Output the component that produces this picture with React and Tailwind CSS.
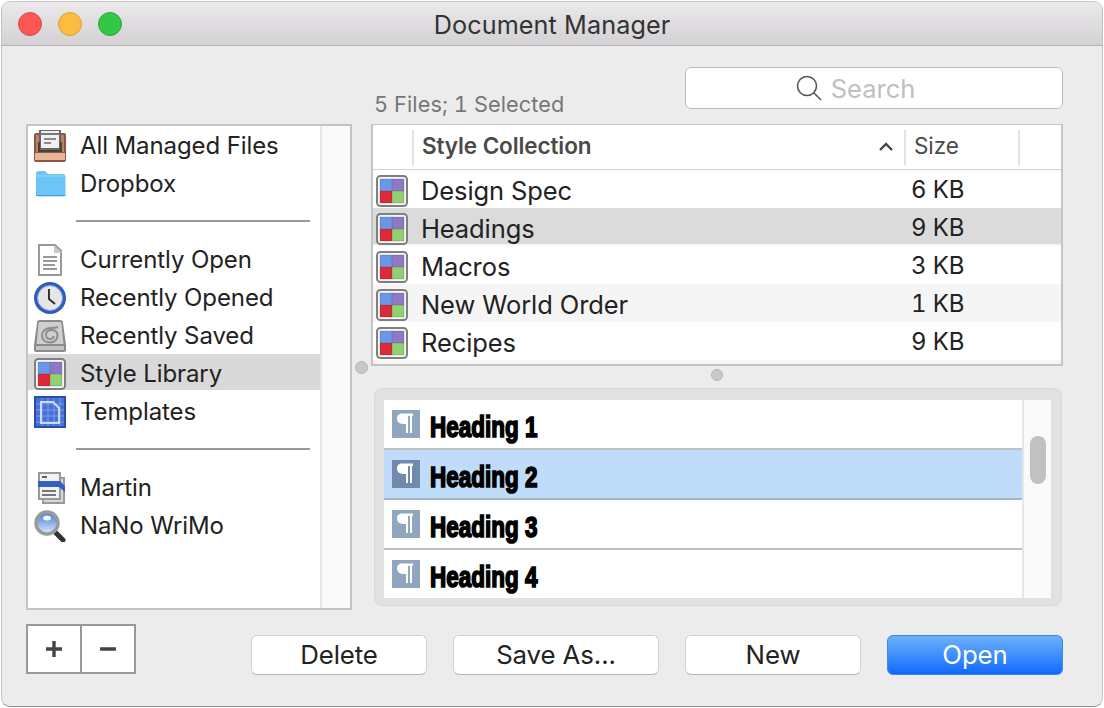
import React from "react";

const F = "font-['Inter','Liberation_Sans',sans-serif]";

function StyleIcon() {
  return (
    <svg width="32" height="32" viewBox="0 0 32 32" className="shrink-0">
      <rect x="1" y="1" width="30" height="30" rx="3.5" fill="#f6f6f6" stroke="#7f7f7f" strokeWidth="2" />
      <rect x="4" y="4" width="12" height="12" fill="#6b97e8" />
      <rect x="16" y="4" width="12" height="12" fill="#8f79c6" />
      <rect x="4" y="16" width="12" height="12" fill="#dd2a3a" />
      <rect x="16" y="16" width="12" height="12" fill="#90d06f" />
      <path d="M4 4h24v24H4zM16 4v24M4 16h24" fill="none" stroke="#000" strokeOpacity=".14" />
    </svg>
  );
}
function BoxIcon() {
  return (
    <svg width="32" height="32" viewBox="0 0 32 32" className="shrink-0">
      <rect x="0" y="3" width="32" height="29" rx="2" fill="#8f5547" />
      <rect x="2" y="5" width="28" height="17" fill="#b8846c" />
      <rect x="1" y="23" width="30" height="7" fill="#e6b896" />
      <rect x="6" y="0" width="20" height="19" fill="#f0f0f0" stroke="#666" strokeWidth="2" />
      <path d="M6 4h20" stroke="#777" strokeWidth="2" />
      <path d="M4 22V12h2v8h20v-8h2v10z" fill="#4d4038" />
      <path d="M10 9h12M10 13h7" stroke="#8a8a8a" strokeWidth="2" />
    </svg>
  );
}
function FolderIcon() {
  return (
    <svg width="32" height="26" viewBox="0 0 32 26" className="shrink-0">
      <path d="M2 2.5C2 1 3 0 4.500 0h6.500l3 3h15c1.500 0 2.500 1 2.500 2.500V23c0 1.500-1 2.500-2.500 2.500h-25C3 25.500 2 24.500 2 23z" fill="#6dc4f6" />
      <path d="M2 5h29" stroke="#9bd8fa" />
      <path d="M2 24.500h29.500" stroke="#4aa0d4" />
    </svg>
  );
}
function DocIcon() {
  return (
    <svg width="32" height="32" viewBox="0 0 32 32" className="shrink-0">
      <path d="M5 1h16l6 6v24H5z" fill="#fff" stroke="#999" strokeWidth="2" />
      <path d="M20 1v8h8z" fill="#c8c8c8" />
      <path d="M9 13h14M9 17h14M9 21h12M9 25h14" stroke="#777" strokeWidth="1.600" />
    </svg>
  );
}
function ClockIcon() {
  return (
    <svg width="32" height="32" viewBox="0 0 32 32" className="shrink-0">
      <circle cx="16" cy="16" r="16" fill="#2f5cb8" />
      <circle cx="16" cy="16" r="12.500" fill="#e6e6e6" stroke="#7f9be0" />
      <path d="M15 7v10l6 5" fill="none" stroke="#333" strokeWidth="2" />
    </svg>
  );
}
function DriveIcon() {
  return (
    <svg width="32" height="32" viewBox="0 0 32 32" className="shrink-0">
      <path d="M6 0h20c2 0 3 1 3 3l3 22v5c0 1-1 2-2 2H2c-1 0-2-1-2-2v-5L3 3c0-2 1-3 3-3z" fill="#8a8a8a" />
      <path d="M6 2h20c1 0 1.500.5 1.500 2l2 20H2.500l2-20C4.500 2.500 5 2 6 2z" fill="#cfcfcf" />
      <rect x="2" y="26" width="28" height="4" fill="#c4c4c4" />
      <path d="M24 7c-2 1-4 1-7 1-5 0-9 3-9 7.500s3.500 7 8 7 7.500-3 7.500-7-2.500-5.500-6-5.500-5.500 2-5.500 5 2 4 4 4 3.500-1 3.500-3" fill="none" stroke="#8d8d8d" strokeWidth="2" />
    </svg>
  );
}
function TemplateIcon() {
  return (
    <svg width="32" height="32" viewBox="0 0 32 32" className="shrink-0">
      <rect width="32" height="32" fill="#2a4ea6" />
      <rect x="2" y="2" width="28" height="28" fill="#4470d8" />
      <path d="M2 8h28M2 14h28M2 20h28M2 26h28M8 2v28M14 2v28M20 2v28M26 2v28" stroke="#7d9be6" strokeWidth="1" />
      <path d="M7 6h12l6 6v15H7z" fill="none" stroke="#cdd9f6" strokeWidth="2" />
    </svg>
  );
}
function SmartIcon() {
  return (
    <svg width="32" height="32" viewBox="0 0 32 32" className="shrink-0">
      <rect x="9" y="6" width="21" height="25" fill="#d8d8d8" stroke="#999" strokeWidth="2" />
      <rect x="5" y="1" width="21" height="26" fill="#f2f2f2" stroke="#999" strokeWidth="2" />
      <path d="M8 5h5" stroke="#666" strokeWidth="2" />
      <path d="M4 9h22l5 5v6L25 15H4z" fill="#3560c0" />
      <path d="M8 19h14M8 23h14" stroke="#777" strokeWidth="2" />
    </svg>
  );
}
function LensIcon() {
  return (
    <svg width="32" height="32" viewBox="0 0 32 32" className="shrink-0">
      <defs>
        <linearGradient id="lens" x1="0" y1="0" x2="0" y2="1">
          <stop offset="0" stopColor="#3d78d8" />
          <stop offset="1" stopColor="#dfe9f8" />
        </linearGradient>
      </defs>
      <path d="M19 20l10 10" stroke="#333" strokeWidth="5" strokeLinecap="round" />
      <circle cx="13" cy="13" r="11" fill="url(#lens)" stroke="#9a9a9a" strokeWidth="3.500" />
      <ellipse cx="13" cy="8" rx="4" ry="2.500" fill="#fff" fillOpacity=".9" />
    </svg>
  );
}
function Pilcrow({ dark }) {
  return (
    <svg width="28" height="28" viewBox="0 0 28 28" className="shrink-0">
      <rect width="28" height="28" fill={dark ? "#7089ac" : "#90a6bf"} />
      <path d="M10 3.500h11v2.500h-1v17h-2V6h-2v17h-2V14h-3c-3.500 0-6-2.200-6-5.200S6.500 3.500 10 3.500z" fill="#fff" />
    </svg>
  );
}

function SideRow({ icon, label, selected }) {
  return (
    <div className="h-[38px] shrink-0">
      <div className={`h-[36px] pt-[4px] flex items-center pl-[6px] ${selected ? "bg-[#d9d9d9]" : ""}`}>
        <div className="w-[32px] h-[32px] flex items-center justify-center shrink-0">{icon}</div>
        <span className="ml-[14px] text-[24px] leading-[36px] text-[#222] tracking-[-0.1px]">{label}</span>
      </div>
    </div>
  );
}
function SideSep() {
  return (
    <div className="h-[38px] shrink-0 flex items-center pl-[48px] pr-[10px]">
      <div className="h-[2px] w-full bg-[#999]" />
    </div>
  );
}
function FileRow({ name, size, bg }) {
  return (
    <div className={`h-[38px] shrink-0 ${bg}`}>
      <div className="h-[36px] pt-[5px] flex items-center pl-[3px]">
        <StyleIcon />
        <span className="ml-[13px] w-[490px] text-[25.5px] leading-[36px] text-[#222] tracking-[-0.1px]">{name}</span>
        <span className="mt-[-2px] text-[24px] leading-[36px] text-[#222] tracking-[-0.1px] tabular-nums">{size}</span>
      </div>
    </div>
  );
}
function HeadingRow({ label, selected }) {
  return (
    <div className={`h-[48px] flex items-start pl-[8px] overflow-hidden ${selected ? "bg-[#bfdcfb]" : ""}`}>
      <div className="mt-[10px]"><Pilcrow dark={selected} /></div>
      <span className="ml-[10px] mt-[9px] inline-block origin-left scale-x-[0.75] font-['Liberation_Sans',sans-serif] font-bold text-black text-[30px] leading-[36px] [-webkit-text-stroke:1.7px_black] whitespace-nowrap">
        {label}
      </span>
    </div>
  );
}
function Btn({ label, w }) {
  return (
    <div className={`${w} h-[40px] shrink-0 flex items-center justify-center rounded-[6px] bg-white border border-[#d2d2d2] border-b-[#b4b4b4] text-[25.8px] text-[#222] leading-none tracking-[-0.1px]`}>
      {label}
    </div>
  );
}

export default function App() {
  return (
    <div className={`w-[1104px] h-[708px] bg-white pt-[1px] pl-[1px] overflow-hidden ${F}`}>
      <div className="w-[1102px] h-[706px] rounded-[9px] bg-[#ececec] border border-[#c4c4c4] border-b-[#8e8e8e] overflow-hidden relative">
        {/* title bar */}
        <div className="h-[44px] relative flex items-center justify-center bg-gradient-to-b from-[#ebe9eb] to-[#d3d1d3] border-b border-[#b4b2b4]">
          <div className="absolute left-[16px] top-[10px] flex gap-[16px]">
            <div className="w-[24px] h-[24px] rounded-full bg-[#fc5753] border border-[#df4744]" />
            <div className="w-[24px] h-[24px] rounded-full bg-[#fdbc40] border border-[#de9f34]" />
            <div className="w-[24px] h-[24px] rounded-full bg-[#33c748] border border-[#27aa35]" />
          </div>
          <span className="text-[25.2px] text-[#333] tracking-[0.1px] mt-[4px]">Document Manager</span>
        </div>

        {/* upper */}
        <div className="flex pl-[24px] relative">
          <div className="pt-[78px]">
            <div className="w-[326px] h-[486px] border-2 border-[#c4c4c4] bg-white flex">
              <div className="w-[292px] flex flex-col">
                <SideRow icon={<BoxIcon />} label="All Managed Files" />
                <SideRow icon={<FolderIcon />} label="Dropbox" />
                <SideSep />
                <SideRow icon={<DocIcon />} label="Currently Open" />
                <SideRow icon={<ClockIcon />} label="Recently Opened" />
                <SideRow icon={<DriveIcon />} label="Recently Saved" />
                <SideRow icon={<StyleIcon />} label="Style Library" selected />
                <SideRow icon={<TemplateIcon />} label="Templates" />
                <SideSep />
                <SideRow icon={<SmartIcon />} label="Martin" />
                <SideRow icon={<LensIcon />} label="NaNo WriMo" />
              </div>
              <div className="flex-1 bg-[#fafafa] border-l-2 border-[#e6e6e6]" />
            </div>
          </div>

          <div className="w-[692px] ml-[19px] flex flex-col relative">
            <div className="h-[78px] flex items-start justify-between">
              <span className="ml-[3px] mt-[44px] text-[21.7px] leading-[28px] text-[#777] tracking-[0.1px] tabular-nums">5 Files; 1 Selected</span>
              <div className="mt-[21px] w-[378px] h-[42px] rounded-[6px] bg-white border border-[#bcbcbc] flex items-center justify-center pr-[35px]">
                <svg width="26" height="26" viewBox="0 0 26 26" className="mr-[9px] ml-[-2px]">
                  <circle cx="11" cy="11" r="9.500" fill="none" stroke="#555" strokeWidth="1.600" />
                  <path d="M18 18l7 7" stroke="#555" strokeWidth="1.600" />
                </svg>
                <span className="text-[25.5px] text-[#c0c0c0] leading-none mt-[2px]">Search</span>
              </div>
            </div>

            {/* file table */}
            <div className="h-[242px] border-2 border-t border-[#c4c4c4] bg-[#f5f5f5] flex flex-col overflow-hidden">
              <div className="h-[45px] shrink-0 bg-white border-b border-[#d4d4d4] flex items-center">
                <div className="w-[41px] h-[35px] border-r-2 border-[#e2e2e2]" />
                <span className="ml-[8px] mt-[-2px] w-[456px] text-[22.5px] font-semibold text-[#4a4a4a] tracking-[-0.1px]">Style Collection</span>
                <svg width="16" height="10" viewBox="0 0 16 10" className="mr-[10px]">
                  <path d="M2 8l6-6 6 6" fill="none" stroke="#444" strokeWidth="2.400" />
                </svg>
                <div className="h-[35px] pb-[2px] border-l-2 border-[#e2e2e2] w-[114px] pl-[8px] flex items-center text-[22.5px] text-[#4a4a4a] tracking-[-0.1px]">Size</div>
                <div className="w-[2px] h-[35px] bg-[#e2e2e2]" />
              </div>
              <FileRow name="Design Spec" size="6 KB" bg="bg-white" />
              <FileRow name="Headings" size="9 KB" bg="bg-[linear-gradient(#dbdbdb_36px,#f5f5f5_36px)]" />
              <FileRow name="Macros" size="3 KB" bg="bg-white" />
              <FileRow name="New World Order" size="1 KB" bg="bg-[#f5f5f5]" />
              <FileRow name="Recipes" size="9 KB" bg="bg-white" />
            </div>

            <div className="absolute left-[340px] top-[323px] w-[12px] h-[12px] rounded-full bg-[#c8c8c8] border border-[#b4b4b4]" />

            {/* styles panel */}
            <div className="mt-[22px] ml-[3px] w-[688px] h-[218px] rounded-[8px] bg-[#e1e1e1] border border-[#d8d8d8] pt-[11px] pl-[9px]">
              <div className="w-[667px] h-[198px] bg-white flex">
                <div className="w-[638px] flex flex-col">
                  <HeadingRow label="Heading 1" />
                  <div className="h-[2px] bg-[#c0c0c0]" />
                  <HeadingRow label="Heading 2" selected />
                  <div className="h-[2px] bg-[#a8b4c4]" />
                  <HeadingRow label="Heading 3" />
                  <div className="h-[2px] bg-[#c0c0c0]" />
                  <HeadingRow label="Heading 4" />
                </div>
                <div className="flex-1 bg-[#fafafa] border-l-2 border-[#e6e6e6] pt-[36px] pl-[6px]">
                  <div className="w-[16px] h-[48px] rounded-full bg-[#c1c1c1]" />
                </div>
              </div>
            </div>
          </div>

          <div className="absolute left-[353px] top-[315px] w-[13px] h-[13px] rounded-full bg-[#c8c8c8] border border-[#b4b4b4]" />
        </div>

        {/* bottom */}
        <div className="flex items-start pl-[24px] mt-[14px]">
          <div className="w-[110px] h-[50px] border-2 border-[#999] bg-white flex shrink-0">
            <div className="w-[52px] flex items-center justify-center">
              <svg width="16" height="16" viewBox="0 0 16 16"><path d="M8 0v16M0 8h16" stroke="#444" strokeWidth="3.400" /></svg>
            </div>
            <div className="flex-1 border-l-2 border-[#999] flex items-center justify-center">
              <svg width="16" height="16" viewBox="0 0 16 16"><path d="M0 8h16" stroke="#444" strokeWidth="3.400" /></svg>
            </div>
          </div>
          <div className="ml-[115px] mt-[11px] flex gap-[26px]">
            <Btn label="Delete" w="w-[176px]" />
            <Btn label="Save As..." w="w-[206px]" />
            <Btn label="New" w="w-[176px]" />
            <div className="w-[176px] h-[40px] shrink-0 flex items-center justify-center rounded-[6px] bg-gradient-to-b from-[#6cb0fb] to-[#0a68fb] border border-[#3d87ee] text-[25.8px] text-white leading-none tracking-[-0.1px]">Open</div>
          </div>
        </div>
      </div>
    </div>
  );
}
